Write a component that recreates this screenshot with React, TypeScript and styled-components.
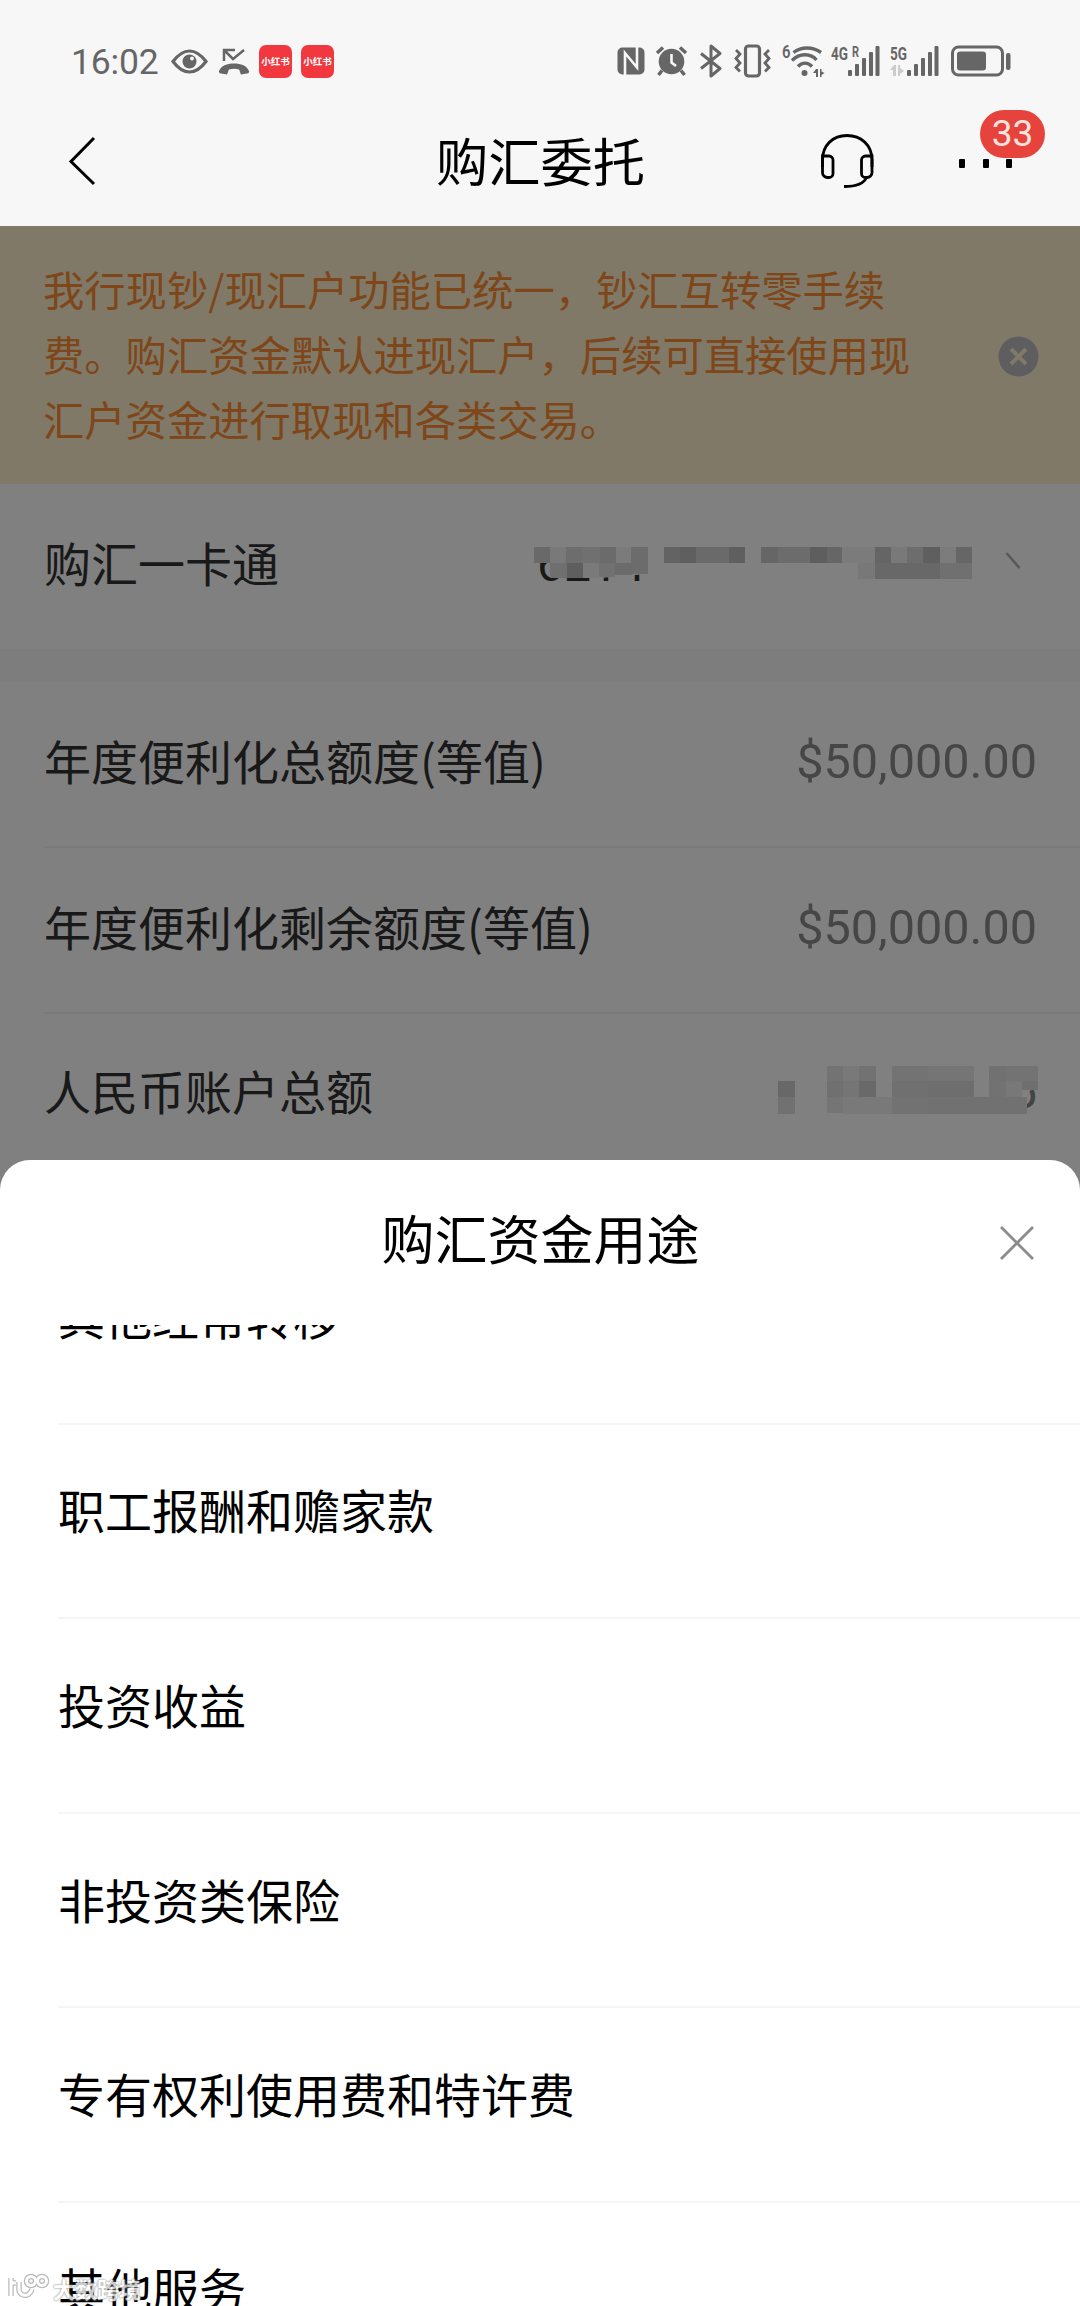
import React from "react";
import styled, { createGlobalStyle } from "styled-components";

const GlobalStyle = createGlobalStyle`
  * { box-sizing: border-box; }
  body { margin: 0; background: #fff; }
`;

const Page = styled.div`
  width: 1080px;
  height: 2306px;
  overflow: hidden;
  position: relative;
  display: flex;
  flex-direction: column;
  background: #fff;
  color: #000;
  font-family: "Noto Sans CJK SC", sans-serif;
`;

const StatusBar = styled.div`
  height: 96px;
  flex: none;
  padding: 26px 0 0 71px;
  display: flex;
  align-items: center;
  background: #f7f7f7;
  color: #666;
  font-family: Roboto, sans-serif;
`;

const Clock = styled.span`
  width: 100px;
  padding-top: 2px;
  font-size: 35.5px;
  line-height: 40px;
  letter-spacing: -0.2px;
`;

const Icon = styled.svg<{ $ml?: number }>`
  flex: none;
  display: block;
  overflow: visible;
  margin-left: ${(p) => p.$ml ?? 0}px;
`;

const AppBadge = styled.span<{ $ml: number }>`
  flex: none;
  width: 33px;
  height: 33px;
  margin-left: ${(p) => p.$ml}px;
  border-radius: 7px;
  background: #f2383f;
  color: #fff;
  display: flex;
  align-items: center;
  justify-content: center;
  white-space: nowrap;
  font: 700 9.5px/12px "Noto Sans CJK SC", sans-serif;
`;

const NavBar = styled.div`
  height: 130px;
  flex: none;
  padding: 0 44px 0 66px;
  display: grid;
  grid-template-columns: 1fr auto 1fr;
  align-items: center;
  background: #f7f7f7;
`;

const NavTitle = styled.h1`
  margin: 0 19px 5px 0;
  padding-right: 2px;
  font-size: 52.3px;
  line-height: 60px;
  font-weight: 400;
`;

const NavActions = styled.div`
  display: flex;
  justify-content: flex-end;
  align-items: center;
`;

const More = styled.div`
  position: relative;
  width: 53px;
  height: 9px;
  margin: 4px 24px 0 85px;
  display: flex;
  justify-content: space-between;
`;

const Dot = styled.i`
  width: 6px;
  height: 9px;
  border-radius: 1px;
  background: #000;
`;

const Count = styled.span`
  position: absolute;
  left: 21px;
  top: -49px;
  width: 65px;
  height: 48px;
  border-radius: 24px;
  background: #e5433c;
  color: #ffe3df;
  text-align: center;
  font: 400 37px/48px Roboto, sans-serif;
`;

const Content = styled.main`
  position: relative;
  height: 964px;
  flex: none;
  display: flex;
  flex-direction: column;
  background: #fff;
`;

const Dim = styled.div`
  position: absolute;
  inset: 0;
  background: rgba(0, 0, 0, 0.498);
`;

const Notice = styled.div`
  height: 258px;
  flex: none;
  padding: 2px 41px 0 43px;
  display: flex;
  align-items: center;
  justify-content: space-between;
  background: #fff2d0;
  color: #fb8c32;
  font-size: 41.3px;
  line-height: 65.3px;
`;

const NoticeText = styled.p`
  margin: 0;
  padding-bottom: 5px;
  white-space: nowrap;
`;

const Row = styled.div<{ $height: number; $line?: boolean }>`
  height: ${(p) => p.$height}px;
  flex: none;
  margin-left: 44px;
  padding: 0 43px 4px 0;
  display: flex;
  align-items: center;
  justify-content: space-between;
  border-bottom: ${(p) => (p.$line ? "2px solid #f3f3f3" : "none")};
  color: #333;
  font-size: 47px;
  line-height: 56px;
`;

const Label = styled.span`
  padding-bottom: 5px;
`;

const Band = styled.div`
  height: 33px;
  flex: none;
  background: #f9f9f9;
`;

const Amount = styled.span`
  color: #8c8c8c;
  font-family: Roboto, sans-serif;
  font-size: 48.6px;
  font-weight: 400;
`;

const CardNumber = styled.div`
  position: relative;
  width: 503px;
  padding-left: 3px;
  display: flex;
  align-items: center;
  justify-content: space-between;
  font-family: Roboto, sans-serif;
  font-size: 48px;
  color: #333;
`;

const Masked = styled.div`
  position: relative;
  font-family: Roboto, sans-serif;
  font-size: 48px;
  color: #888;
`;

const Mosaic = styled.svg<{ $left: number; $top: number }>`
  position: absolute;
  left: ${(p) => p.$left}px;
  top: ${(p) => p.$top}px;
`;

const Sheet = styled.section`
  position: relative;
  flex: 1;
  min-height: 0;
  margin-top: -30px;
  border-radius: 30px 30px 0 0;
  background: #fff;
  display: flex;
  flex-direction: column;
`;

const SheetHeader = styled.header`
  height: 165px;
  flex: none;
  padding: 0 46px 0 47px;
  display: grid;
  grid-template-columns: 34px 1fr 34px;
  align-items: center;
`;

const SheetTitle = styled.h2`
  margin: 0;
  padding-bottom: 11px;
  text-align: center;
  font-size: 53px;
  line-height: 60px;
  font-weight: 400;
`;

const List = styled.ul`
  flex: 1;
  min-height: 0;
  margin: 0;
  padding: 0;
  list-style: none;
  overflow: hidden;
  display: flex;
  flex-direction: column;
  justify-content: flex-start;
`;

const Item = styled.li`
  height: 194.6px;
  flex: none;
  margin-left: 58px;
  padding-bottom: 23px;
  display: flex;
  align-items: center;
  border-bottom: 2px solid #f5f5f5;
  font-size: 47px;
  line-height: 56px;

  &:first-child {
    margin-top: -95px;
  }
`;

const Watermark = styled.div`
  position: absolute;
  left: 8px;
  top: 2272px;
  display: flex;
  align-items: center;
  color: #fff;
  opacity: 0.8;
  font-size: 22px;
  line-height: 32px;
  font-weight: 700;
  text-shadow: 0 0 2px #888, 0 0 2px #888;
`;

const WatermarkText = styled.span`
  margin-left: 4px;
`;

type Cell = [number, number, number, number, string];

const cardCells: Cell[] = [
  [0, 0, 16, 16, "#d2d2d2"], [16, 0, 16, 16, "#f2f2f2"], [32, 0, 16, 16, "#dadada"],
  [48, 0, 18, 16, "#e0e0e0"], [66, 0, 16, 16, "#d6d6d6"], [82, 0, 15, 16, "#f6f6f6"],
  [97, 0, 17, 27, "#d8d8d8"], [16, 16, 17, 15, "#dedede"], [33, 16, 16, 15, "#bbb"],
  [49, 16, 16, 15, "#f3f3f3"], [65, 16, 16, 14, "#e2e2e2"], [81, 16, 17, 12, "#d6d6d6"],
  [130, 0, 16, 16, "#c6c6c6"], [146, 0, 16, 16, "#bdbdbd"], [162, 0, 33, 16, "#d3d3d3"],
  [195, 0, 16, 16, "#bebebe"], [227, 0, 17, 16, "#cbcbcb"], [244, 0, 32, 16, "#d8d8d8"],
  [276, 0, 17, 16, "#bbb"], [293, 0, 15, 16, "#cbcbcb"], [308, 0, 33, 16, "#f6f6f6"],
  [341, 0, 16, 16, "#cacaca"], [357, 0, 16, 16, "#f2f2f2"], [373, 0, 16, 16, "#dadada"],
  [389, 0, 17, 16, "#bdbdbd"], [406, 0, 16, 16, "#f7f7f7"], [422, 0, 16, 16, "#cbcbcb"],
  [324, 16, 17, 16, "#f0f0f0"], [341, 16, 65, 16, "#cfcfcf"], [406, 16, 32, 16, "#e0e0e0"],
];

const balanceCells: Cell[] = [
  [0, 15, 17, 16, "#cfcfcf"], [0, 31, 17, 17, "#e2e2e2"],
  [49, 0, 16, 15, "#e6e6e6"], [65, 0, 16, 15, "#f2f2f2"], [81, 0, 17, 15, "#e4e4e4"],
  [49, 15, 16, 16, "#dfdfdf"], [65, 15, 16, 16, "#e9e9e9"], [81, 15, 17, 17, "#d2d2d2"],
  [49, 31, 16, 16, "#eaeaea"], [65, 31, 49, 17, "#f1f1f1"],
  [114, 0, 36, 15, "#e5e5e5"], [150, 0, 46, 15, "#e9e9e9"],
  [114, 15, 36, 16, "#dfdfdf"], [150, 15, 46, 16, "#dcdcdc"],
  [114, 31, 36, 17, "#e4e4e4"], [150, 31, 61, 17, "#e1e1e1"],
  [211, 0, 17, 15, "#e1e1e1"], [228, 0, 32, 15, "#e6e6e6"],
  [211, 15, 17, 16, "#e4e4e4"], [228, 15, 16, 16, "#f0f0f0"], [244, 15, 16, 9, "#dedede"],
  [211, 31, 38, 17, "#e1e1e1"],
];

const purposes = [
  "其他经常转移",
  "职工报酬和赡家款",
  "投资收益",
  "非投资类保险",
  "专有权利使用费和特许费",
  "其他服务",
];

const Cells = ({ cells }: { cells: Cell[] }) => (
  <>
    {cells.map(([x, y, w, h, fill], i) => (
      <rect key={i} x={x} y={y} width={w} height={h} fill={fill} />
    ))}
  </>
);

const Signal = ({ label, roaming, idle, ml }: { label: string; roaming?: boolean; idle?: boolean; ml: number }) => (
  <Icon $ml={ml} width="49" height="32" viewBox="0 0 49 32" fill="#666">
    <text x="0" y="15" fontFamily="Roboto, sans-serif" fontSize="18.5" fontWeight="700" textLength="17" lengthAdjust="spacingAndGlyphs">{label}</text>
    {roaming && (
      <text x="21" y="12" fontFamily="Roboto, sans-serif" fontSize="14.5" fontWeight="700" textLength="7" lengthAdjust="spacingAndGlyphs">R</text>
    )}
    {idle && <path fill="#ccc" d="M4 20h2v11H3v-6H0zM8 20h2v3l4 3-4 3v2H8z" />}
    <rect x="17" y="25" width="4" height="6" rx="1" />
    <rect x="24" y="19" width="4" height="12" rx="1" />
    <rect x="31" y="13" width="4" height="18" rx="1" />
    <rect x="38" y="7" width="4" height="24" rx="1" />
    <rect x="44.5" y="1" width="4" height="30" rx="1" />
  </Icon>
);

export default function App() {
  return (
    <Page>
      <GlobalStyle />
      <StatusBar>
        <Clock>16:02</Clock>
        <Icon width="37" height="25" viewBox="0 0 37 25">
          <path d="M2 12.5C8 4.5 13 2 18.5 2S29 4.5 35 12.5C29 20.5 24 23 18.5 23S8 20.5 2 12.5Z" fill="none" stroke="#666" strokeWidth="3.2" />
          <circle cx="18.5" cy="12.5" r="7" fill="#666" />
          <circle cx="21" cy="9.5" r="1.9" fill="#f7f7f7" />
        </Icon>
        <Icon $ml={10} width="32" height="27" viewBox="0 0 32 27">
          <path d="M6 13V2h11M6 2l9 9L26 2" fill="none" stroke="#666" strokeWidth="2.5" />
          <path d="M.8 23.5C3 17.5 9 15.5 16 15.5s13 2 15.2 8l-.8 1.7-7.5 1.3-1.8-5c-3.4-1-6.8-1-10.2 0l-1.8 5-7.5-1.3z" fill="#666" />
        </Icon>
        <AppBadge $ml={9}>小红书</AppBadge>
        <AppBadge $ml={9}>小红书</AppBadge>
        <Icon $ml={283} width="28" height="28" viewBox="0 0 28 28">
          <rect x=".5" y=".5" width="27" height="27" rx="5" fill="#666" />
          <path d="M8 28V6l12 14.5V0" fill="none" stroke="#f7f7f7" strokeWidth="2.6" />
        </Icon>
        <Icon $ml={11} width="31" height="30" viewBox="0 0 31 30">
          <circle cx="15.5" cy="15.5" r="12.8" fill="#666" />
          <path d="M1 7 7 1.5M30 7l-6-5.5M6 24.5 2.5 29M25 24.5l3.5 4.5" stroke="#666" strokeWidth="3.5" />
          <path d="M15.5 8v8.5l4.5 3.5" fill="none" stroke="#f7f7f7" strokeWidth="2.6" />
        </Icon>
        <Icon $ml={13} width="22" height="34" viewBox="0 0 22 34">
          <path d="M1 9.5 20 24.5 11 32V2l9 7.5L1 24.5" fill="none" stroke="#666" strokeWidth="3" strokeLinejoin="round" />
        </Icon>
        <Icon $ml={12} width="37" height="34" viewBox="0 0 37 34">
          <rect x="11.5" y="2" width="14" height="30" rx="3" fill="none" stroke="#666" strokeWidth="3.2" />
          <path d="m2 6 4 4-4 4.5 4 4.5-4 4.5 4 4M35 6l-4 4 4 4.5-4 4.5 4 4.5-4 4" fill="none" stroke="#666" strokeWidth="2.8" />
        </Icon>
        <Icon $ml={11} width="42" height="34" viewBox="0 0 42 34">
          <text x="0" y="14" fontFamily="Roboto, sans-serif" fontSize="18" fontWeight="600" fill="#666" textLength="8.5" lengthAdjust="spacingAndGlyphs">6</text>
          <path d="M11.5 8.5c8-6 19-6 27.5 0M10 16.5c8-8 19-7 24.5-.5M16 22.5c4-4.5 10-4.5 14 0" fill="none" stroke="#666" strokeWidth="3.4" />
          <circle cx="22.5" cy="29" r="3" fill="#666" />
          <path d="M34 25h2v8h-2v-4h-3zM38 25h1.5v2.5l3 1.5-3 2v2H38z" fill="#666" />
        </Icon>
        <Signal label="4G" roaming ml={7} />
        <Signal label="5G" idle ml={10} />
        <Icon $ml={12} width="60" height="32" viewBox="0 0 60 32">
          <rect x="1.5" y="2" width="50" height="28" rx="6" fill="none" stroke="#666" strokeWidth="3" />
          <rect x="6" y="6.5" width="29" height="19" rx="3" fill="#666" />
          <rect x="55" y="8" width="4.5" height="17" rx="2" fill="#666" />
        </Icon>
      </StatusBar>

      <NavBar>
        <Icon width="32" height="52" viewBox="0 0 32 52">
          <path d="M28 3 5 26.5 28 49" fill="none" stroke="#000" strokeWidth="3" />
        </Icon>
        <NavTitle>购汇委托</NavTitle>
        <NavActions>
          <Icon width="54" height="56" viewBox="0 0 54 56" fill="none" stroke="#000" strokeWidth="2.8">
            <path d="M2.5 34V27C2.5 12 13 2.5 27 2.5s25 9.5 25 24.5v7" />
            <path d="M2.5 23h6.5a4 4 0 0 1 4 4v13.500a4 4 0 0 1-4 4H7.500a5 5 0 0 1-5-5zM52 23h-6.500a4 4 0 0 0-4 4v13.500a4 4 0 0 0 4 4h1.500a5 5 0 0 0 5-5z" />
            <path d="M46.500 44.500c-2.500 6-9 9-22.500 9" />
          </Icon>
          <More>
            <Dot />
            <Dot />
            <Dot />
            <Count>33</Count>
          </More>
        </NavActions>
      </NavBar>

      <Content>
        <Notice>
          <NoticeText>
            我行现钞/现汇户功能已统一，钞汇互转零手续
            <br />
            费。购汇资金默认进现汇户，后续可直接使用现
            <br />
            汇户资金进行取现和各类交易。
          </NoticeText>
          <Icon width="41" height="41" viewBox="0 0 41 41">
            <circle cx="20.5" cy="20.5" r="20" fill="#bcbabf" />
            <path d="m13 13 15 15M28 13 13 28" stroke="#fff2d0" strokeWidth="4" />
          </Icon>
        </Notice>
        <Row $height={165}>
          <Label>购汇一卡通</Label>
          <CardNumber>
            <span>6214</span>
            <Mosaic $left={0} $top={10} width="440" height="36">
              <rect x="0" y="0" width="440" height="16" fill="#fff" />
              <path d="M13 16h101v11L65 31H22z" fill="#fff" />
              <Cells cells={cardCells} />
            </Mosaic>
            <Icon width="32" height="34" viewBox="0 0 32 34">
              <path d="M1.5 5 14.5 20" fill="none" stroke="#b0b0b0" strokeWidth="2.5" />
            </Icon>
          </CardNumber>
        </Row>
        <Band />
        <Row $height={166} $line>
          <Label>年度便利化总额度(等值)</Label>
          <Amount>$50,000.00</Amount>
        </Row>
        <Row $height={166} $line>
          <Label>年度便利化剩余额度(等值)</Label>
          <Amount>$50,000.00</Amount>
        </Row>
        <Row $height={160}>
          <Label>人民币账户总额</Label>
          <Masked>
            5
            <Mosaic $left={-232} $top={2} width="262" height="50">
              <path d="M228 0h34v24h-9l-6 6 0 12h-19z" fill="#fff" />
              <Cells cells={balanceCells} />
            </Mosaic>
          </Masked>
        </Row>
        <Dim />
      </Content>

      <Sheet>
        <SheetHeader>
          <span />
          <SheetTitle>购汇资金用途</SheetTitle>
          <Icon width="34" height="34" viewBox="0 0 34 34">
            <path d="m1 1 32 32M33 1 1 33" stroke="#8c8c8c" strokeWidth="2.8" />
          </Icon>
        </SheetHeader>
        <List>
          {purposes.map((name) => (
            <Item key={name}>{name}</Item>
          ))}
        </List>
      </Sheet>

      <Watermark>
        <Icon width="41" height="28" viewBox="0 0 41 28" fill="none">
          <g stroke="#aaa" strokeWidth="5.5">
            <path d="M3 4v18M3 9h5M11 8v7c0 5 4 7 8 6 3-1 4-3 5-6" />
            <circle cx="23" cy="7" r="4.5" />
            <circle cx="34" cy="7" r="4.5" />
          </g>
          <g stroke="#fff" strokeWidth="3">
            <path d="M3 4v18M3 9h5M11 8v7c0 5 4 7 8 6 3-1 4-3 5-6" />
            <circle cx="23" cy="7" r="4.5" />
            <circle cx="34" cy="7" r="4.5" />
          </g>
        </Icon>
        <WatermarkText>大数跨境</WatermarkText>
      </Watermark>
    </Page>
  );
}
